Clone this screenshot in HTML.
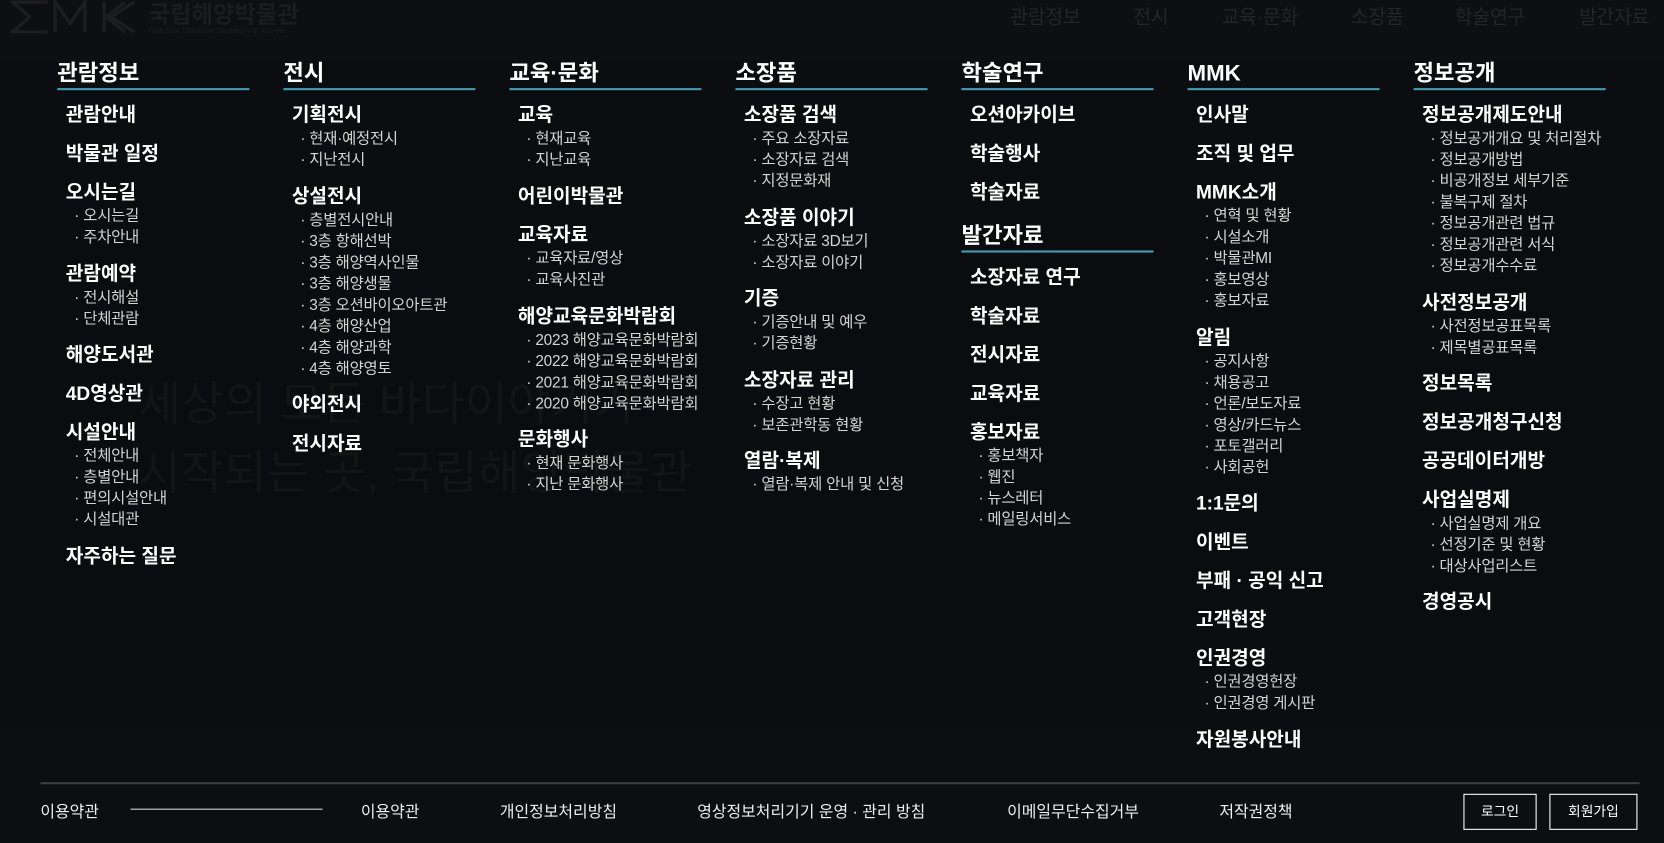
<!DOCTYPE html>
<html><head><meta charset="utf-8"><style>
html,body{margin:0;padding:0;background:#0a0c0f;overflow:hidden;width:1664px;height:843px}
#w{position:absolute;left:0;top:0;width:1568px;height:794px;transform:scale(1.06122);transform-origin:0 0;font-family:"Liberation Sans","Noto Sans CJK KR",sans-serif;color:#fff;background:linear-gradient(180deg,#0b0d10 0%,#0a0c0f 60%,#0c0e11 100%)}
.hdr{position:absolute;left:0;top:0;width:1568px;height:57px;background:#0e0f11}
.logo{position:absolute;left:10px;top:0;color:#1c1c1c;font-size:22px;font-weight:bold}
.logo small{position:absolute;left:130px;top:24px;font-size:8px;white-space:nowrap;font-weight:normal}
.tnav{position:absolute;top:2px;font-size:18px;color:#252525}
.ghost{position:absolute;left:130px;font-size:44px;color:#121416;white-space:nowrap}
.col{position:absolute;top:56px;width:181px;white-space:nowrap}
.col h2{margin:0;font-size:21px;font-weight:bold;line-height:27px;padding-bottom:0;border-bottom:2px solid #3f9db0}
.col ul{list-style:none;margin:10px 0 0 8px;padding:0}
.col li.h{font-size:18px;font-weight:bold;line-height:26px;margin-top:10.5px}
.col li.h:first-child{margin-top:0}
.col li.s{font-size:14.5px;line-height:20px;color:#d4d4d4;padding-left:8px;letter-spacing:-0.2px}
.col h2.mid{margin-top:15px}
.foot{position:absolute;left:38px;top:737px;width:1507px;height:2px;background:#3d3d3d}
.fl{position:absolute;top:754px;font-size:15px;color:#eee}
.btn{position:absolute;top:748px;height:32px;border:1px solid #fff;font-size:13px;line-height:32px;text-align:center}
</style></head><body><div id="w">
<div class="hdr"></div>
<div class="logo"><svg width="120" height="32" viewBox="0 0 120 32" style="position:absolute;left:0;top:0"><g stroke="#1e1e1e" stroke-width="3" fill="none"><path d="M35 2H2l16 14L2 30h33M42 30V2l14 20 14-20v28M88 2v28M116 2L95 16l21 14M108 2L90 16l18 14"/></g></svg><span style="position:absolute;left:130px;top:-4px;white-space:nowrap">국립해양박물관</span><small>National Maritime Museum of Korea</small></div>
<div class="tnav" style="left:952px">관람정보</div><div class="tnav" style="left:1068px">전시</div><div class="tnav" style="left:1151px">교육·문화</div><div class="tnav" style="left:1273px">소장품</div><div class="tnav" style="left:1371px">학술연구</div><div class="tnav" style="left:1488px">발간자료</div>
<div class="ghost" style="top:345px">세상의 모든 바다이야기가</div>
<div class="ghost" style="top:410px">시작되는 곳, 국립해양박물관</div>

<div class="col" style="left:54px"><h2>관람정보</h2><ul>
<li class="h">관람안내</li><li class="h">박물관 일정</li><li class="h">오시는길</li><li class="s">· 오시는길</li><li class="s">· 주차안내</li><li class="h">관람예약</li><li class="s">· 전시해설</li><li class="s">· 단체관람</li><li class="h">해양도서관</li><li class="h">4D영상관</li><li class="h">시설안내</li><li class="s">· 전체안내</li><li class="s">· 층별안내</li><li class="s">· 편의시설안내</li><li class="s">· 시설대관</li><li class="h">자주하는 질문</li></ul></div>

<div class="col" style="left:267px"><h2>전시</h2><ul>
<li class="h">기획전시</li><li class="s">· 현재·예정전시</li><li class="s">· 지난전시</li><li class="h">상설전시</li><li class="s">· 층별전시안내</li><li class="s">· 3층 항해선박</li><li class="s">· 3층 해양역사인물</li><li class="s">· 3층 해양생물</li><li class="s">· 3층 오션바이오아트관</li><li class="s">· 4층 해양산업</li><li class="s">· 4층 해양과학</li><li class="s">· 4층 해양영토</li><li class="h">야외전시</li><li class="h">전시자료</li></ul></div>

<div class="col" style="left:480px"><h2>교육·문화</h2><ul>
<li class="h">교육</li><li class="s">· 현재교육</li><li class="s">· 지난교육</li><li class="h">어린이박물관</li><li class="h">교육자료</li><li class="s">· 교육자료/영상</li><li class="s">· 교육사진관</li><li class="h">해양교육문화박람회</li><li class="s">· 2023 해양교육문화박람회</li><li class="s">· 2022 해양교육문화박람회</li><li class="s">· 2021 해양교육문화박람회</li><li class="s">· 2020 해양교육문화박람회</li><li class="h">문화행사</li><li class="s">· 현재 문화행사</li><li class="s">· 지난 문화행사</li></ul></div>

<div class="col" style="left:693px"><h2>소장품</h2><ul>
<li class="h">소장품 검색</li><li class="s">· 주요 소장자료</li><li class="s">· 소장자료 검색</li><li class="s">· 지정문화재</li><li class="h">소장품 이야기</li><li class="s">· 소장자료 3D보기</li><li class="s">· 소장자료 이야기</li><li class="h">기증</li><li class="s">· 기증안내 및 예우</li><li class="s">· 기증현황</li><li class="h">소장자료 관리</li><li class="s">· 수장고 현황</li><li class="s">· 보존관학동 현황</li><li class="h">열람·복제</li><li class="s">· 열람·복제 안내 및 신청</li></ul></div>

<div class="col" style="left:906px"><h2>학술연구</h2><ul>
<li class="h">오션아카이브</li><li class="h">학술행사</li><li class="h">학술자료</li></ul>
<h2 class="mid">발간자료</h2><ul>
<li class="h">소장자료 연구</li><li class="h">학술자료</li><li class="h">전시자료</li><li class="h">교육자료</li><li class="h">홍보자료</li><li class="s">· 홍보책자</li><li class="s">· 웹진</li><li class="s">· 뉴스레터</li><li class="s">· 메일링서비스</li></ul></div>

<div class="col" style="left:1119px"><h2>MMK</h2><ul>
<li class="h">인사말</li><li class="h">조직 및 업무</li><li class="h">MMK소개</li><li class="s">· 연혁 및 현황</li><li class="s">· 시설소개</li><li class="s">· 박물관MI</li><li class="s">· 홍보영상</li><li class="s">· 홍보자료</li><li class="h">알림</li><li class="s">· 공지사항</li><li class="s">· 채용공고</li><li class="s">· 언론/보도자료</li><li class="s">· 영상/카드뉴스</li><li class="s">· 포토갤러리</li><li class="s">· 사회공헌</li><li class="h">1:1문의</li><li class="h">이벤트</li><li class="h">부패 · 공익 신고</li><li class="h">고객현장</li><li class="h">인권경영</li><li class="s">· 인권경영헌장</li><li class="s">· 인권경영 게시판</li><li class="h">자원봉사안내</li></ul></div>

<div class="col" style="left:1332px"><h2>정보공개</h2><ul>
<li class="h">정보공개제도안내</li><li class="s">· 정보공개개요 및 처리절차</li><li class="s">· 정보공개방법</li><li class="s">· 비공개정보 세부기준</li><li class="s">· 불복구제 절차</li><li class="s">· 정보공개관련 법규</li><li class="s">· 정보공개관련 서식</li><li class="s">· 정보공개수수료</li><li class="h">사전정보공개</li><li class="s">· 사전정보공표목록</li><li class="s">· 제목별공표목록</li><li class="h">정보목록</li><li class="h">정보공개청구신청</li><li class="h">공공데이터개방</li><li class="h">사업실명제</li><li class="s">· 사업실명제 개요</li><li class="s">· 선정기준 및 현황</li><li class="s">· 대상사업리스트</li><li class="h">경영공시</li></ul></div>

<div class="foot"></div>
<div class="fl" style="left:38px">이용약관</div>
<div style="position:absolute;left:123px;top:762px;width:181px;height:1px;background:#ddd"></div>
<div class="fl" style="left:340px">이용약관</div>
<div class="fl" style="left:471px">개인정보처리방침</div>
<div class="fl" style="left:657px">영상정보처리기기 운영 · 관리 방침</div>
<div class="fl" style="left:949px">이메일무단수집거부</div>
<div class="fl" style="left:1149px">저작권정책</div>
<div class="btn" style="left:1379px;width:67px">로그인</div>
<div class="btn" style="left:1460px;width:81px">회원가입</div>
</div></body></html>
